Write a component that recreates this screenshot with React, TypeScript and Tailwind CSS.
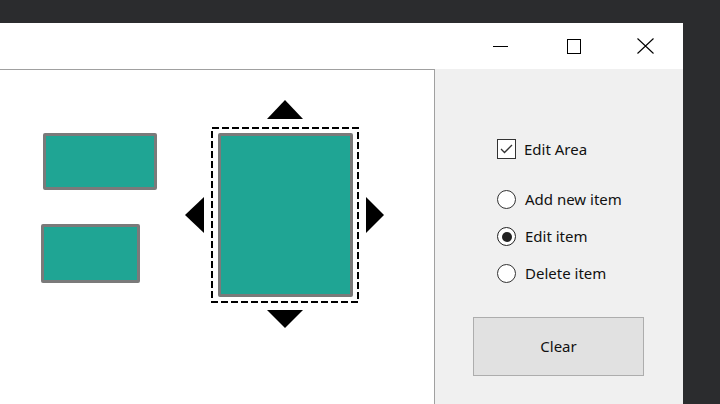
export default function App() {
  return (
    <div
      className="w-[720px] h-[404px] overflow-hidden bg-[#2b2c2e] pt-[23px]"
      style={{ fontFamily: '"Noto Sans", "Open Sans", sans-serif' }}
    >
      {/* window */}
      <div className="w-[683px] h-[381px] bg-white flex flex-col">
        {/* title bar */}
        <div className="h-[46px] flex items-center justify-end">
          <div className="w-[73px] h-full flex items-center justify-center">
            <div className="w-[15px] h-px bg-black" />
          </div>
          <div className="w-[73px] h-full flex items-center justify-center">
            <div className="w-[14px] h-[15px] border border-black" />
          </div>
          <div className="w-[73px] h-full flex items-center justify-center pr-[2px]">
            <svg width="17" height="16" viewBox="0 0 17 16">
              <path d="M0.5 0.5 L16.5 15.5 M16.5 0.5 L0.5 15.5" stroke="#000" strokeWidth="1.1" fill="none" />
            </svg>
          </div>
        </div>

        <div className="flex flex-1">
          {/* drawing canvas */}
          <div className="relative w-[435px] border-t border-r border-[#a0a0a0] bg-white">
            <Item className="left-[43px] top-[63px] w-[114px] h-[57px]" />
            <Item className="left-[41px] top-[154px] w-[99px] h-[59px]" />
            <Item className="left-[218px] top-[63px] w-[135px] h-[164px]" />

            {/* selection frame */}
            <svg className="absolute left-[211px] top-[57px]" width="148" height="176" viewBox="0 0 148 176">
              <rect x="1" y="1" width="146" height="174" fill="none" stroke="#000" strokeWidth="2" strokeDasharray="7 3" />
            </svg>

            {/* resize handles */}
            <svg className="absolute left-[267px] top-[30px]" width="36" height="19" viewBox="0 0 36 19">
              <polygon points="18,0 36,19 0,19" fill="#000" />
            </svg>
            <svg className="absolute left-[267px] top-[240px]" width="36" height="18" viewBox="0 0 36 18">
              <polygon points="0,0 36,0 18,18" fill="#000" />
            </svg>
            <svg className="absolute left-[185px] top-[127px]" width="19" height="36" viewBox="0 0 19 36">
              <polygon points="19,0 19,36 0,18" fill="#000" />
            </svg>
            <svg className="absolute left-[366px] top-[127px]" width="18" height="36" viewBox="0 0 18 36">
              <polygon points="0,0 18,18 0,36" fill="#000" />
            </svg>
          </div>

          {/* options panel */}
          <div className="flex-1 bg-[#f0f0f0] pt-[70px] text-[15px] text-[#111]">
            <div className="pl-[62px] flex flex-col">
              <label className="flex items-center h-[20px] gap-[8px]">
                <span className="w-[19px] h-[20px] border border-[#333] bg-white flex items-center justify-center">
                  <svg width="13" height="10" viewBox="0 0 13 10">
                    <path d="M1 5 L4.5 8.5 L12 1" stroke="#333" strokeWidth="1.3" fill="none" />
                  </svg>
                </span>
                Edit Area
              </label>

              <div className="mt-[31px] flex flex-col gap-[18px]">
                <Radio label="Add new item" />
                <Radio label="Edit item" checked />
                <Radio label="Delete item" />
              </div>
            </div>

            <div className="pl-[38px] mt-[34px]">
              <button className="w-[171px] h-[59px] bg-[#e1e1e1] border border-[#adadad] text-[15px] text-[#111]">
                Clear
              </button>
            </div>
          </div>
        </div>
      </div>
    </div>
  );
}

function Item({ className }: { className: string }) {
  return (
    <div
      className={`absolute bg-[#1fa594] border-[3px] border-[#7a7a7a] rounded-[2px] ${className}`}
    />
  );
}

function Radio({ label, checked }: { label: string; checked?: boolean }) {
  return (
    <label className="flex items-center h-[19px] gap-[9px]">
      <span
        className={`w-[19px] h-[19px] rounded-full bg-white flex items-center justify-center ${
          checked ? 'border-[1.5px] border-[#222]' : 'border border-[#333]'
        }`}
      >
        {checked && <span className="w-[10px] h-[10px] rounded-full bg-[#222]" />}
      </span>
      {label}
    </label>
  );
}
